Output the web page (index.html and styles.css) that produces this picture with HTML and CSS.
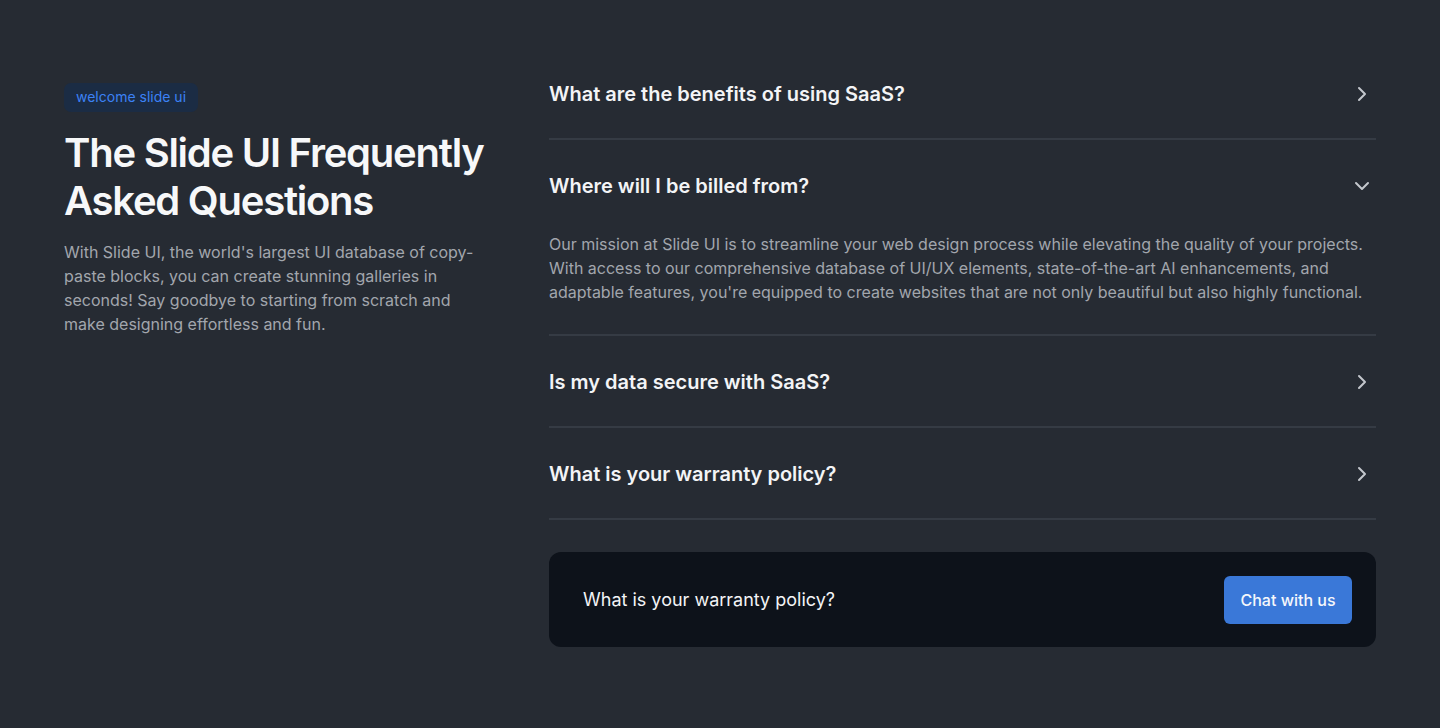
FILE: index.html
```html
<!DOCTYPE html>
<html lang="en">
<head>
<meta charset="utf-8">
<title>FAQ</title>
<link rel="stylesheet" href="styles.css">
</head>
<body>
<section class="faq">
  <div class="intro">
    <span class="badge">welcome slide ui</span>
    <h1 class="title">The Slide UI Frequently Asked Questions</h1>
    <p class="lead">With Slide UI, the world's largest UI database of copy-paste blocks, you can create stunning galleries in seconds! Say goodbye to starting from scratch and make designing effortless and fun.</p>
  </div>
  <div class="list">
    <div class="item">
      <div class="question">
        <span>What are the benefits of using SaaS?</span>
        <svg class="chev" viewBox="0 0 24 24"><path d="m9 18 6-6-6-6"/></svg>
      </div>
    </div>
    <div class="item open">
      <div class="question">
        <span>Where will I be billed from?</span>
        <svg class="chev" viewBox="0 0 24 24"><path d="m6 9 6 6 6-6"/></svg>
      </div>
      <p class="answer">Our mission at Slide UI is to streamline your web design process while elevating the quality of your projects. With access to our comprehensive database of UI/UX elements, state-of-the-art AI enhancements, and adaptable features, you're equipped to create websites that are not only beautiful but also highly functional.</p>
    </div>
    <div class="item">
      <div class="question">
        <span>Is my data secure with SaaS?</span>
        <svg class="chev" viewBox="0 0 24 24"><path d="m9 18 6-6-6-6"/></svg>
      </div>
    </div>
    <div class="item">
      <div class="question">
        <span>What is your warranty policy?</span>
        <svg class="chev" viewBox="0 0 24 24"><path d="m9 18 6-6-6-6"/></svg>
      </div>
    </div>
    <div class="cta">
      <span class="cta-text">What is your warranty policy?</span>
      <button class="cta-btn">Chat with us</button>
    </div>
  </div>
</section>
</body>
</html>
```

FILE: styles.css
```css
* { box-sizing: border-box; }
html, body { margin: 0; padding: 0; }
body {
  background: #262b33;
  font-family: Inter, "Noto Sans", sans-serif;
  color: #f3f4f6;
  min-height: 728px;
}
.faq {
  display: flex;
  gap: 48px;
  padding: 48px 64px 64px;
  align-items: flex-start;
}
.intro {
  width: 437px;
  flex-shrink: 0;
  padding-top: 35px;
}
.badge {
  display: inline-block;
  background: #1b2c44;
  color: #3b82f6;
  font-size: 14px;
  line-height: 20px;
  padding: 4px 12px 5px;
  border-radius: 7px;
}
.title {
  margin: 17px 0 0;
  font-size: 40px;
  line-height: 48px;
  font-weight: 600;
  letter-spacing: -1.25px;
  color: #f7f8f9;
}
.lead {
  margin: 15px 0 0;
  max-width: 420px;
  font-size: 16px;
  line-height: 24px;
  color: #a2a6ad;
}
.list {
  flex: 1;
  display: flex;
  flex-direction: column;
}
.item {
  border-bottom: 2px solid #353b44;
}
.question {
  display: flex;
  align-items: center;
  justify-content: space-between;
  padding: 32px 2px 30px 0;
  font-size: 20px;
  line-height: 28px;
  font-weight: 600;
  color: #f3f4f6;
}
.chev {
  width: 24px;
  height: 24px;
  fill: none;
  stroke: #c3c7cd;
  stroke-width: 2;
  stroke-linecap: round;
  stroke-linejoin: round;
}
.answer {
  margin: 0;
  padding: 2px 0 30px;
  font-size: 16px;
  line-height: 24px;
  color: #a2a6ad;
}
.cta {
  margin-top: 32px;
  background: #0d121a;
  border-radius: 12px;
  padding: 24px 24px 23px 34px;
  display: flex;
  align-items: center;
  justify-content: space-between;
}
.cta-text {
  font-size: 18px;
  line-height: 28px;
  color: #f3f4f6;
}
.cta-btn {
  font-family: inherit;
  background: #3a78d8;
  color: #f5f7fb;
  font-size: 16px;
  line-height: 24px;
  font-weight: 500;
  border: none;
  border-radius: 6px;
  padding: 12px 16px;
  width: 128px;
}
```
